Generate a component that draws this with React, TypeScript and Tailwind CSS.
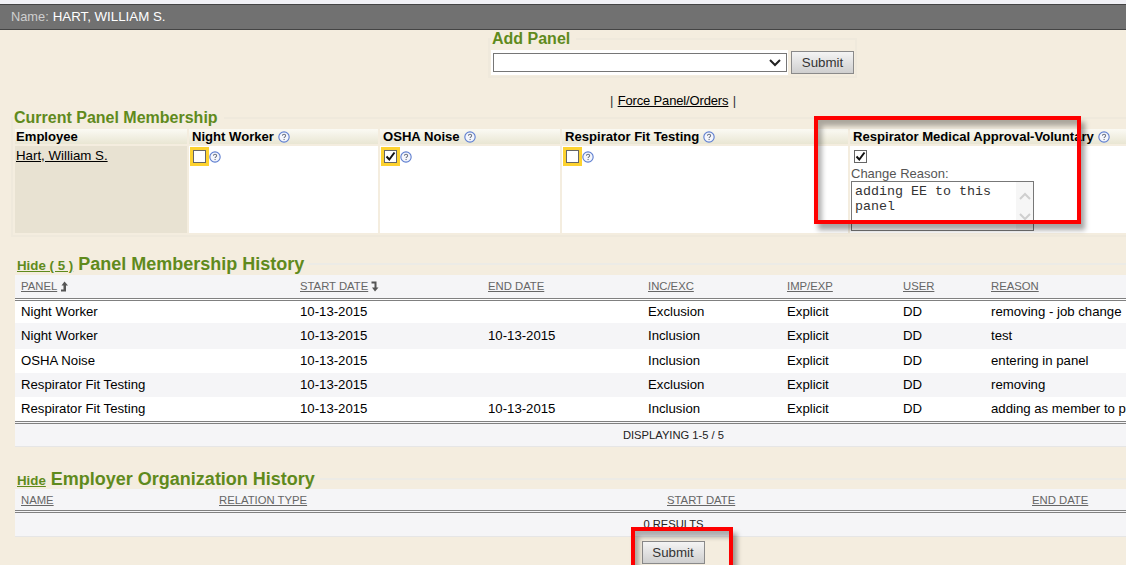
import React from "react";

const rows = [
  ["Night Worker", "10-13-2015", "", "Exclusion", "Explicit", "DD", "removing - job change"],
  ["Night Worker", "10-13-2015", "10-13-2015", "Inclusion", "Explicit", "DD", "test"],
  ["OSHA Noise", "10-13-2015", "", "Inclusion", "Explicit", "DD", "entering in panel"],
  ["Respirator Fit Testing", "10-13-2015", "", "Exclusion", "Explicit", "DD", "removing"],
  ["Respirator Fit Testing", "10-13-2015", "10-13-2015", "Inclusion", "Explicit", "DD", "adding as member to panel"],
];

const HelpIcon = () => (
  <svg width="12" height="12" viewBox="0 0 13 13" className="shrink-0">
    <circle cx="6.5" cy="6.5" r="5.6" fill="#f4f6fc" stroke="#5f7fd0" strokeWidth="1.2" />
    <path d="M4.8 5.2c0-1 .8-1.6 1.8-1.6s1.7.6 1.7 1.5c0 1.2-1.7 1.2-1.7 2.5" fill="none" stroke="#6b7280" strokeWidth="1.1" />
    <rect x="6" y="8.6" width="1.2" height="1.2" fill="#6b7280" />
  </svg>
);

const CheckBox = ({ checked, flagged }: { checked: boolean; flagged: boolean }) => (
  <span className={`flex items-center justify-center w-[19px] h-[19px] ${flagged ? "bg-[#fdd22f]" : ""}`}>
    <span className="flex items-center justify-center w-[13px] h-[13px] bg-white border border-[#666]">
      {checked && (
        <svg width="11" height="11" viewBox="0 0 11 11">
          <path d="M1.5 5.5l2.8 3L9.5 1.5" fill="none" stroke="#111" strokeWidth="2" />
        </svg>
      )}
    </span>
  </span>
);

const SubmitButton = () => (
  <button className="w-[63px] h-[23px] border border-[#8a8a8a] bg-gradient-to-b from-[#f4f4f4] to-[#cfcfcf] text-[13.3px] text-[#333] leading-none">
    Submit
  </button>
);

const HeadCell = ({ label, help, w, pad }: { label: string; help?: boolean; w: string; pad: string }) => (
  <th className={`${w} h-[15px] p-0 bg-gradient-to-b from-[#fbfaf4] to-[#e9e6d3] text-left align-middle`}>
    <span className={`flex items-center gap-1 ${pad} text-[13.1px] leading-[15px] font-bold text-black whitespace-nowrap`}>
      {label}
      {help && <HelpIcon />}
    </span>
  </th>
);

const SortLink = ({ label, children }: { label: string; children?: React.ReactNode }) => (
  <span className="flex items-center gap-[3px] text-[11.3px] leading-[14px] text-[#666]">
    <span className="underline">{label}</span>
    {children}
  </span>
);

const SortUp = () => (
  <svg width="8" height="11" viewBox="0 0 8 11">
    <path d="M4.5 0.5L8 4.5H6V10.5H1V8.5H3.5V4.5H1.5Z" fill="#555" />
  </svg>
);

const SortDown = () => (
  <svg width="8" height="11" viewBox="0 0 8 11">
    <path d="M0.5 0.5H5.5V6.5H7.5L4 10.5L1 6.5H3.5V2.5H0.5Z" fill="#555" />
  </svg>
);

export default function App() {
  return (
    <div className="relative w-[1126px] h-[565px] overflow-hidden bg-[#f4eddf] font-['Liberation_Sans',Arial,sans-serif]">
      <div className="h-[4px] bg-[#f0f0f5]" />
      <div className="h-[26px] pl-[11px] flex items-center bg-[#717171] border-y border-[#444]">
        <span className="text-[12.8px] text-[#cfcfcf]">Name:</span>
        <span className="ml-1 text-[13.3px] text-white">HART, WILLIAM S.</span>
      </div>

      <div className="w-[1346px]">
        <fieldset className="ml-[488px] w-[369px] h-[48px] border-2 border-[#efe9dc] pl-px">
          <legend className="pl-px pr-[6px] text-[16px] leading-[18px] font-bold text-[#5f8a1c]">Add Panel</legend>
          <div className="flex items-center gap-[3px] mt-[2px]">
            <div className="w-[297px] h-[25px] bg-white py-[3px] pl-[2px] pr-px flex">
              <div className="flex-1 flex items-center justify-end pr-[5px] border border-[#767676] bg-white">
                <svg width="12" height="8" viewBox="0 0 12 8">
                  <path d="M1 1l5 5 5-5" fill="none" stroke="#222" strokeWidth="2" />
                </svg>
              </div>
            </div>
            <SubmitButton />
          </div>
        </fieldset>

        <div className="pt-[15px] h-[30px] text-center text-[13px] tracking-[-0.15px] leading-[15px] text-[#333]">
          | <span className="mx-px underline text-black">Force Panel/Orders</span> |
        </div>

        <fieldset className="ml-[11px] w-[1335px] h-[129px] border-2 border-[#efe9dc] pt-[2px]">
          <legend className="ml-px pr-[6px] text-[16px] leading-[19px] font-bold text-[#5f8a1c]">
            Current Panel Membership
          </legend>
          <table className="border-separate border-spacing-x-[2px] border-spacing-y-0 table-fixed w-[1319px]">
            <thead>
              <tr>
                <HeadCell label="Employee" w="w-[172px]" pad="pl-px" />
                <HeadCell label="Night Worker" help w="w-[189px]" pad="pl-[3px]" />
                <HeadCell label="OSHA Noise" help w="w-[180px]" pad="pl-[3px]" />
                <HeadCell label="Respirator Fit Testing" help w="w-[286px]" pad="pl-[3px]" />
                <HeadCell label="Respirator Medical Approval-Voluntary" help w="w-[480px]" pad="pl-[3px]" />
              </tr>
            </thead>
            <tbody>
              <tr>
                <td className="h-[89px] p-0 pl-px pt-[2px] align-top border-t-2 border-[#f4eddf] bg-[#e8e2d2] text-[13.3px] leading-[16px]">
                  <span className="underline text-black">Hart, William S.</span>
                </td>
                {[false, true, false].map((checked, i) => (
                  <td key={i} className="p-0 pt-px pl-px align-top border-t-2 border-[#f4eddf] bg-white">
                    <div className="flex items-center">
                      <CheckBox checked={checked} flagged />
                      <HelpIcon />
                    </div>
                  </td>
                ))}
                <td className="p-0 pl-px align-top border-t-2 border-[#f4eddf] bg-white">
                  <div className="mt-px">
                    <CheckBox checked flagged={false} />
                  </div>
                  <div className="text-[13px] leading-[15px] text-[#555]">Change Reason:</div>
                  <div className="flex w-[183px] h-[50px] border border-[#777] bg-white">
                    <div className="flex-1 pl-[3px] pt-[2px] font-['Liberation_Mono',monospace] text-[13.33px] leading-[15px] text-[#333]">
                      adding EE to this panel
                    </div>
                    <div className="w-[17px] bg-[#f6f6f6] flex flex-col items-center pt-[10px] gap-[13px]">
                      <svg width="12" height="8" viewBox="0 0 12 8">
                        <path d="M1 7l5-5 5 5" fill="none" stroke="#cfcfcf" strokeWidth="2" />
                      </svg>
                      <svg width="12" height="8" viewBox="0 0 12 8">
                        <path d="M1 1l5 5 5-5" fill="none" stroke="#cfcfcf" strokeWidth="2" />
                      </svg>
                    </div>
                  </div>
                </td>
              </tr>
            </tbody>
          </table>
        </fieldset>

        <fieldset className="mt-[17px] ml-[15px] w-[1317px] border-t-2 border-[#ecebe6]">
          <legend className="ml-[2px] pr-[5px] h-[20px] flex items-baseline gap-[5px] font-bold text-[#5f8a1c] leading-[20px]">
            <span className="text-[13.3px] underline">Hide ( 5 )</span>
            <span className="text-[18px]">Panel Membership History</span>
          </legend>
          <table className="w-full table-fixed border-collapse mt-px">
            <thead>
              <tr className="bg-[#f5f5f7] border-b-[3px] border-double border-[#808080]">
                <th className="w-[285px] h-[24px] p-0 pl-[6px] text-left font-normal"><SortLink label="PANEL"><SortUp /></SortLink></th>
                <th className="w-[188px] p-0 text-left font-normal"><SortLink label="START DATE"><SortDown /></SortLink></th>
                <th className="w-[160px] p-0 text-left font-normal"><SortLink label="END DATE" /></th>
                <th className="w-[139px] p-0 text-left font-normal"><SortLink label="INC/EXC" /></th>
                <th className="w-[116px] p-0 text-left font-normal"><SortLink label="IMP/EXP" /></th>
                <th className="w-[88px] p-0 text-left font-normal"><SortLink label="USER" /></th>
                <th className="p-0 text-left font-normal"><SortLink label="REASON" /></th>
              </tr>
            </thead>
            <tbody>
              {rows.map((row, i) => (
                <tr key={i} className={`${i === 1 ? "h-[26px]" : "h-[24px]"} text-[13.2px] text-black ${i % 2 ? "bg-[#f5f5f7]" : "bg-white"}`}>
                  <td className="p-0 pl-[6px]">{row[0]}</td>
                  {row.slice(1).map((cell, j) => (
                    <td key={j} className="p-0 whitespace-nowrap">{cell}</td>
                  ))}
                </tr>
              ))}
            </tbody>
          </table>
          <div className="h-[26px] flex items-center justify-center bg-[#f5f5f7] border-t-[3px] border-double border-[#808080] border-b border-b-[#e6e6e6] text-[11.2px] text-[#222]">
            DISPLAYING 1-5 / 5
          </div>
        </fieldset>

        <fieldset className="mt-[22px] ml-[15px] w-[1317px] border-t-2 border-[#ecebe6]">
          <legend className="ml-[2px] pr-[5px] h-[20px] flex items-baseline gap-[5px] font-bold text-[#5f8a1c] leading-[20px]">
            <span className="text-[13.3px] underline">Hide</span>
            <span className="text-[18px]">Employer Organization History</span>
          </legend>
          <div className="h-[24px] pl-[6px] flex items-center bg-[#f5f5f7] border-b-[3px] border-double border-[#808080]">
            <span className="w-[198px]"><SortLink label="NAME" /></span>
            <span className="w-[448px]"><SortLink label="RELATION TYPE" /></span>
            <span className="w-[365px]"><SortLink label="START DATE" /></span>
            <SortLink label="END DATE" />
          </div>
          <div className="h-[24px] flex items-center justify-center bg-[#f5f5f7] border-b border-[#e6e6e6] text-[11.2px] text-[#222]">
            0 RESULTS
          </div>
        </fieldset>

        <div className="mt-[4px] flex justify-center">
          <SubmitButton />
        </div>
      </div>

      <div className="absolute left-[814px] top-[116px] w-[267px] h-[108px] border-[4px] border-[#fe0000] shadow-[4px_6px_5px_rgba(0,0,0,0.35),inset_4px_6px_5px_rgba(0,0,0,0.3)]" />
      <div className="absolute left-[631px] top-[527px] w-[102px] h-[50px] border-[4px] border-[#fe0000] shadow-[4px_6px_5px_rgba(0,0,0,0.35),inset_4px_6px_5px_rgba(0,0,0,0.3)]" />
    </div>
  );
}
